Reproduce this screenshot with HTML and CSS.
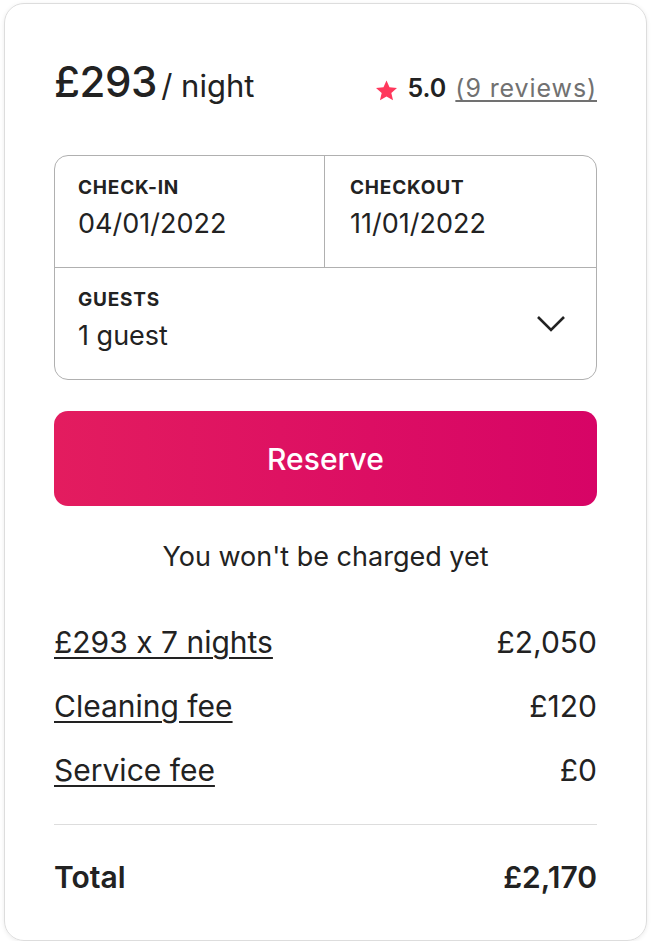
FILE: index.html
```html
<!DOCTYPE html>
<html lang="en">
<head>
    <meta charset="UTF-8">
    <meta name="viewport" content="width=device-width, initial-scale=1.0">
    <title>Booking</title>
    <link rel="stylesheet" href="styles.css">
</head>
<body>

<div class="card">
    <div class="card-header">
        <div class="price"><span class="amount">£293</span> <span class="per">/ night</span></div>
        <div class="rating">
            <svg class="star" viewBox="0 0 32 32" width="23" height="23"><path d="M16 2l4.2 9.6 10.4 1-7.9 6.9 2.4 10.2L16 24.4l-9.1 5.3 2.4-10.2L1.4 12.6l10.4-1z" fill="#ff385c"/></svg>
            <span class="score">5.0</span>
            <a class="reviews" href="#">(9 reviews)</a>
        </div>
    </div>

    <div class="picker">
        <div class="picker-row">
            <div class="cell cell-left">
                <div class="label">Check-in</div>
                <div class="value">04/01/2022</div>
            </div>
            <div class="cell cell-right">
                <div class="label">Checkout</div>
                <div class="value">11/01/2022</div>
            </div>
        </div>
        <div class="picker-row">
            <div class="cell">
                <div class="label">Guests</div>
                <div class="value">1 guest</div>
            </div>
            <svg class="chevron" viewBox="0 0 30 20" width="30" height="20"><path d="M2 3l13 13L28 3" fill="none" stroke="#222" stroke-width="2.6"/></svg>
        </div>
    </div>

    <button class="reserve">Reserve</button>

    <p class="notice">You won't be charged yet</p>

    <div class="lines">
        <div class="line"><a href="#">£293 x 7 nights</a><span>£2,050</span></div>
        <div class="line"><a href="#">Cleaning fee</a><span>£120</span></div>
        <div class="line"><a href="#">Service fee</a><span>£0</span></div>
    </div>

    <div class="total">
        <span>Total</span>
        <span>£2,170</span>
    </div>
</div>

</body>
</html>
```

FILE: styles.css
```css
body {
    margin: 0;
    background-color: #fff;
    font-family: Inter, 'Noto Sans', sans-serif;
    font-feature-settings: 'calt' 0;
    color: #222;
}

.card {
    box-sizing: border-box;
    margin: 3px 0 0 4px;
    width: 643px;
    height: 938px;
    padding: 54px 49px 0 49px;
    border: 1px solid #dddddd;
    border-radius: 20px;
    box-shadow: 0 1px 4px rgba(0, 0, 0, 0.08);
}

.card-header {
    display: flex;
    justify-content: space-between;
    align-items: baseline;
    height: 48px;
}

.price {
    line-height: 48px;
}

.amount {
    font-size: 42px;
    font-weight: 500;
    letter-spacing: -0.5px;
}

.per {
    font-size: 31px;
    font-weight: 400;
}

.rating {
    display: flex;
    align-items: baseline;
    gap: 9px;
    font-size: 25px;
}

.star {
    align-self: center;
    margin-top: 4px;
}

.score {
    font-weight: 600;
}

.reviews {
    color: #717171;
    letter-spacing: 0.9px;
    text-decoration: underline;
    text-decoration-thickness: 1.5px;
    text-underline-offset: 3px;
}

.picker {
    margin-top: 49px;
    border: 1.5px solid #b0b0b0;
    border-radius: 14px;
}

.picker-row {
    display: flex;
    height: 111px;
}

.picker-row + .picker-row {
    border-top: 1.5px solid #b0b0b0;
}

.cell {
    flex: 1;
    padding: 21px 24px 0 23px;
}

.cell-left {
    border-right: 1.5px solid #b0b0b0;
}

.cell-right {
    padding-left: 25px;
}

.label {
    font-size: 19px;
    line-height: 22px;
    font-weight: 700;
    letter-spacing: 0.8px;
    text-transform: uppercase;
}

.value {
    margin-top: 7px;
    font-size: 27px;
    line-height: 36px;
}

.chevron {
    align-self: center;
    margin-right: 30px;
}

.reserve {
    display: block;
    width: 100%;
    height: 95px;
    margin-top: 31px;
    border: none;
    border-radius: 14px;
    background: linear-gradient(to right, #e31c5f, #d70466);
    color: #fff;
    font-family: inherit;
    font-size: 30px;
    font-weight: 500;
    cursor: pointer;
}

.notice {
    margin: 33px 0 0;
    text-align: center;
    font-size: 27px;
    line-height: 36px;
}

.lines {
    display: flex;
    flex-direction: column;
    gap: 24px;
    margin-top: 47px;
    padding-bottom: 34px;
    border-bottom: 1.5px solid #dddddd;
}

.line {
    display: flex;
    justify-content: space-between;
    font-size: 30px;
    line-height: 40px;
}

.line a {
    color: #222;
    text-decoration: underline;
    text-decoration-thickness: 1.5px;
    text-underline-offset: 4px;
}

.total {
    display: flex;
    justify-content: space-between;
    margin-top: 32px;
    font-size: 30px;
    line-height: 40px;
    font-weight: 600;
}
```
